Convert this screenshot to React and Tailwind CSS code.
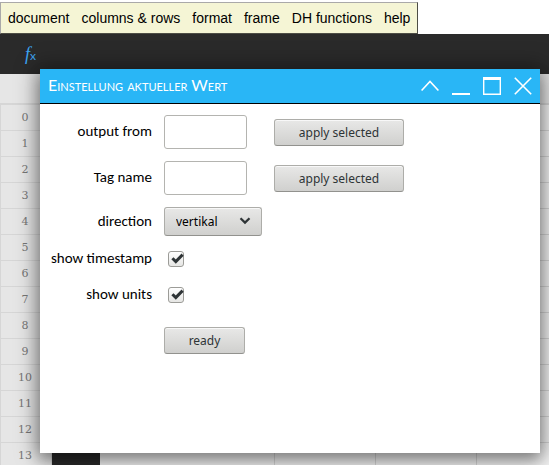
import React from "react";

const menuItems = ["document", "columns & rows", "format", "frame", "DH functions", "help"];
const rowNumbers = Array.from({ length: 14 }, (_, i) => i);

function MenuBar() {
  return (
    <nav className="mt-[2px] flex h-8 w-fit items-center gap-3 border border-t-[#aaa9a9] border-r-[#4d4d45] border-b-[#4d4d45] border-l-[#aaa9a9] bg-[#f5f5d5] pr-[7px] pl-[7px] font-['Liberation_Sans',sans-serif] text-sm text-black">
      {menuItems.map((item) => (
        <button key={item} type="button" className="whitespace-nowrap">
          {item}
        </button>
      ))}
    </nav>
  );
}

function FormulaBar() {
  return (
    <div className="flex h-10 items-center bg-[#2a2a2a] pl-[25px] text-[#3da5f4]">
      <span className="font-['Liberation_Serif',serif] text-lg leading-5 italic">f</span>
      <span className="pt-1 font-['Lato',sans-serif] text-xs leading-4">x</span>
    </div>
  );
}

function Sheet() {
  return (
    <table className="w-full table-fixed border-separate border-spacing-0 bg-[#f3f3f3]">
      <colgroup>
        <col className="w-[52px]" />
        <col className="w-12" />
        <col className="w-[175px]" />
        <col className="w-[101px]" />
        <col className="w-[101px]" />
        <col />
      </colgroup>
      <thead>
        <tr className="h-[31px] bg-[#e6e6e6]">
          {[0, 1, 2, 3, 4, 5].map((c) => (
            <th key={c} className="border-b-2 border-[#d6d6d6] p-0" />
          ))}
        </tr>
      </thead>
      <tbody>
        {rowNumbers.map((n) => (
          <tr key={n} className="h-[26px]">
            <th className="border-r border-b border-l border-[#d6d6d6] bg-[#e6e6e6] py-0 pr-0.5 pl-0 font-['DejaVu_Serif',serif] text-[11px] leading-4 font-normal text-[#777]">
              {n}
            </th>
            <td className={n === 13 ? "bg-[#2a2a2a] p-0" : "border-r border-b border-[#d6d6d6] p-0"} />
            <td className="border-r border-b border-[#d6d6d6] p-0" />
            <td className="border-r border-b border-[#d6d6d6] p-0" />
            <td className="border-r border-b border-[#d6d6d6] p-0" />
            <td className="border-b border-[#d6d6d6] p-0" />
          </tr>
        ))}
      </tbody>
    </table>
  );
}

function WindowButton({ label, children }) {
  return (
    <button type="button" aria-label={label} className="size-[18px]">
      <svg viewBox="0 0 18 18" className="size-[18px]" fill="none" stroke="white" strokeWidth="1.6">
        {children}
      </svg>
    </button>
  );
}

function TitleBar() {
  return (
    <header className="flex h-[35px] items-center justify-between border-b border-black bg-[#29b6f6] pr-2 pl-2 text-white">
      <h1 className="pb-0.5 font-['Lato','Carlito',sans-serif] text-base font-normal whitespace-nowrap [font-variant:small-caps]">
        Einstellung aktueller Wert
      </h1>
      <div className="flex gap-[13px]">
        <WindowButton label="Smallify">
          <path d="M0.6 13.5 9 4.5l8.4 9" />
        </WindowButton>
        <WindowButton label="Minimize">
          <path d="M0 17h18" strokeWidth="2" />
        </WindowButton>
        <WindowButton label="Maximize">
          <path d="M0.7 0.7h16.6v16.6H0.7z" strokeWidth="1.4" />
          <path d="M0 1.5h18" strokeWidth="3" />
        </WindowButton>
        <WindowButton label="Close">
          <path d="M0.8 0.8l16.4 16.4M17.2 0.8 0.8 17.2" />
        </WindowButton>
      </div>
    </header>
  );
}

const raised =
  "rounded-[3px] border border-[#adada9] border-b-[#92928e] bg-linear-to-b from-[#e8e8e7] to-[#d0d0ce] shadow-[inset_0_1px_0_#f8f8f8]";

function PushButton({ children, className }) {
  return (
    <button
      type="button"
      className={`h-[27px] pt-px font-['Noto_Sans',sans-serif] text-xs text-[#2e3436] ${raised} ${className}`}
    >
      {children}
    </button>
  );
}

function Label({ htmlFor, children }) {
  return (
    <label htmlFor={htmlFor} className="pb-0.5 text-right text-[15px] leading-4 whitespace-nowrap">
      {children}
    </label>
  );
}

function TextBox({ id }) {
  return <input id={id} type="text" className="h-[34px] w-[83px] rounded-[3px] border border-[#b4b4b0] bg-white px-2" />;
}

function CheckBox({ id }) {
  return (
    <span className="relative ml-1 block size-4">
      <input
        id={id}
        type="checkbox"
        defaultChecked
        className="peer block size-4 appearance-none rounded-[3px] border border-[#9c9c98] bg-linear-to-b from-white to-[#e6e6e4]"
      />
      <svg
        viewBox="0 0 16 16"
        className="pointer-events-none absolute inset-0 hidden size-4 peer-checked:block"
        fill="none"
        stroke="#2e3436"
        strokeWidth="3"
      >
        <path d="M4.4 7.2 7.8 10.6 14.6 3.6" />
      </svg>
    </span>
  );
}

function SettingsWindow() {
  return (
    <section className="absolute top-[69px] right-[9px] left-10 min-h-96 bg-white shadow-[0_0_20px_4px_rgba(0,0,0,0.35),0_8px_14px_rgba(0,0,0,0.28)]">
      <TitleBar />
      <form className="grid grid-cols-[112px_1fr] items-center gap-x-3 pt-[11px] font-['Carlito','Lato',sans-serif] text-sm text-black">
        <Label htmlFor="output">output from</Label>
        <div className="flex h-[34px] items-center gap-[27px]">
          <TextBox id="output" />
          <PushButton className="w-[130px]">apply selected</PushButton>
        </div>
        <div className="col-span-2 h-3" />
        <Label htmlFor="tag">Tag name</Label>
        <div className="flex h-[34px] items-center gap-[27px]">
          <TextBox id="tag" />
          <PushButton className="w-[130px]">apply selected</PushButton>
        </div>
        <div className="col-span-2 h-3" />
        <Label htmlFor="direction">direction</Label>
        <div className="relative w-[98px]">
          <select
            id="direction"
            className={`block h-[29px] w-full appearance-none pl-[11px] font-['Noto_Sans',sans-serif] text-xs ${raised}`}
          >
            <option>vertikal</option>
            <option>horizontal</option>
          </select>
          <svg
            viewBox="0 0 12 8"
            className="pointer-events-none absolute top-[10px] right-[11px] h-2 w-3"
            fill="none"
            stroke="#2e3436"
            strokeWidth="2.2"
          >
            <path d="M1.5 1.2 6 5.6l4.5-4.4" />
          </svg>
        </div>
        <div className="col-span-2 h-[14px]" />
        <Label htmlFor="timestamp">show timestamp</Label>
        <CheckBox id="timestamp" />
        <div className="col-span-2 h-[18px]" />
        <Label htmlFor="units">show units</Label>
        <CheckBox id="units" />
        <div className="col-span-2 h-[23px]" />
        <PushButton className="col-start-2 w-[81px]">ready</PushButton>
      </form>
    </section>
  );
}

export default function App() {
  return (
    <main className="relative h-screen overflow-hidden bg-white">
      <MenuBar />
      <FormulaBar />
      <Sheet />
      <SettingsWindow />
    </main>
  );
}
